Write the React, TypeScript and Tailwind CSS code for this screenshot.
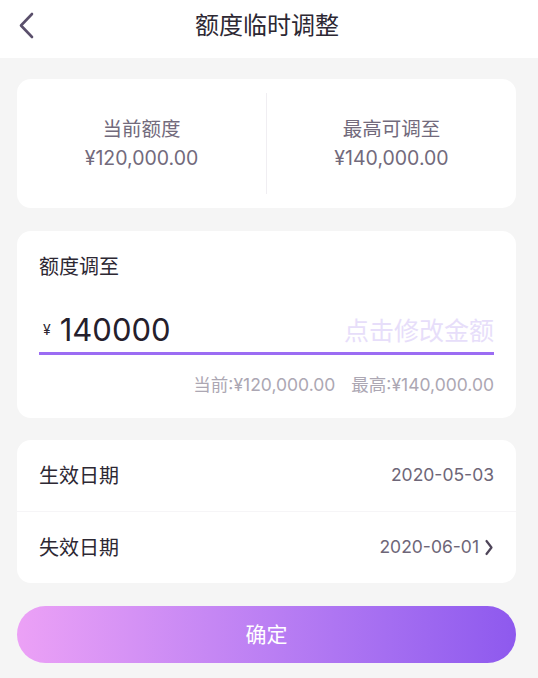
import React from "react";

export default function App() {
  const font = { fontFamily: 'Inter, "Noto Sans CJK SC", sans-serif' };
  return (
    <div className="w-[538px] h-[678px] bg-[#f5f5f5] flex flex-col" style={font}>
      <div className="h-[58px] bg-white relative flex items-center justify-center shrink-0">
        <svg className="absolute left-[17px] top-[12px]" width="18" height="28" viewBox="0 0 18 28">
          <path d="M15 2 L4 13.5 L15 25" fill="none" stroke="#5a4f6b" strokeWidth="2.6" strokeLinecap="round" strokeLinejoin="round" />
        </svg>
        <span className="text-[24px] text-[#2d2833] leading-none -mt-[6px] ml-[-4px]">额度临时调整</span>
      </div>

      <div className="pl-[17px] pr-[22px] pt-[21px] flex flex-col">
        <div className="h-[129px] bg-white rounded-[14px] flex items-center">
          <div className="flex-1 flex flex-col items-center gap-[4px] text-[19.5px] text-[#726a7c] leading-[25px]">
            <span>当前额度</span>
            <span>¥120,000.00</span>
          </div>
          <div className="w-px h-[101px] bg-[#f0eef2]" />
          <div className="flex-1 flex flex-col items-center gap-[4px] text-[19.5px] text-[#726a7c] leading-[25px]">
            <span>最高可调至</span>
            <span>¥140,000.00</span>
          </div>
        </div>

        <div className="mt-[23px] h-[187px] bg-white rounded-[14px] px-[22px] pt-[24px] flex flex-col">
          <span className="text-[20px] text-[#2d2833] leading-[25px]">额度调至</span>
          <div className="mt-[34px] flex items-end justify-between border-b-[3px] border-[#9b6cf3] pb-[7px]">
            <div className="flex items-end">
              <span className="text-[14px] text-[#2d2833] leading-none mb-[8px] ml-[4px]">¥</span>
              <span className="text-[31px] text-[#25202c] leading-none ml-[9px]">140000</span>
            </div>
            <span className="text-[25px] text-[#e7defa] leading-none mb-[1px]">点击修改金额</span>
          </div>
          <div className="mt-[21px] flex justify-end gap-[16px] text-[17.5px] text-[#aca7b3] leading-none">
            <span>当前:¥120,000.00</span>
            <span>最高:¥140,000.00</span>
          </div>
        </div>

        <div className="mt-[22px] bg-white rounded-[14px] flex flex-col">
          <div className="h-[72px] px-[22px] flex items-center justify-between border-b border-[#f6f5f7]">
            <span className="text-[20px] text-[#2d2833]">生效日期</span>
            <span className="text-[17.5px] text-[#6e6678]">2020-05-03</span>
          </div>
          <div className="h-[71px] px-[22px] flex items-center justify-between">
            <span className="text-[20px] text-[#2d2833]">失效日期</span>
            <div className="flex items-center gap-[5px]">
              <span className="text-[17.5px] text-[#6e6678]">2020-06-01</span>
              <svg width="10" height="17" viewBox="0 0 10 17">
                <path d="M2.5 2 L7.5 8.5 L2.5 15" fill="none" stroke="#4e4559" strokeWidth="2.2" strokeLinecap="round" strokeLinejoin="round" />
              </svg>
            </div>
          </div>
        </div>

        <button className="mt-[23px] h-[57px] rounded-full bg-gradient-to-r from-[#eca1f6] to-[#8e59ee] flex items-center justify-center">
          <span className="text-[21px] text-white">确定</span>
        </button>
      </div>
    </div>
  );
}
